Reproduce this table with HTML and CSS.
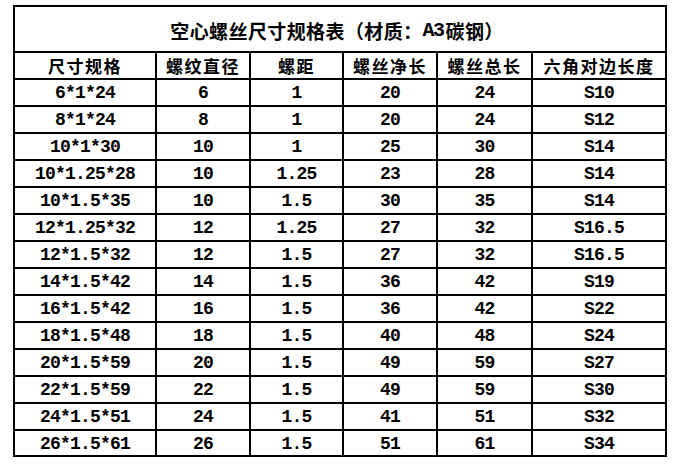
FILE: index.html
```html
<!DOCTYPE html>
<html lang="zh-CN">
<head>
<meta charset="utf-8">
<title>空心螺丝尺寸规格表</title>
<link rel="stylesheet" href="styles.css">
</head>
<body>
<div class="sheet">
  <div class="title">空心螺丝尺寸规格表（材质：<span class="latin">A3</span>碳钢）</div>
  <div class="head">尺寸规格</div><div class="head">螺纹直径</div><div class="head">螺距</div><div class="head">螺丝净长</div><div class="head">螺丝总长</div><div class="head">六角对边长度</div>
  <div class="c">6*1*24</div><div class="c">6</div><div class="c">1</div><div class="c">20</div><div class="c">24</div><div class="c">S10</div>
  <div class="c">8*1*24</div><div class="c">8</div><div class="c">1</div><div class="c">20</div><div class="c">24</div><div class="c">S12</div>
  <div class="c">10*1*30</div><div class="c">10</div><div class="c">1</div><div class="c">25</div><div class="c">30</div><div class="c">S14</div>
  <div class="c">10*1.25*28</div><div class="c">10</div><div class="c">1.25</div><div class="c">23</div><div class="c">28</div><div class="c">S14</div>
  <div class="c">10*1.5*35</div><div class="c">10</div><div class="c">1.5</div><div class="c">30</div><div class="c">35</div><div class="c">S14</div>
  <div class="c">12*1.25*32</div><div class="c">12</div><div class="c">1.25</div><div class="c">27</div><div class="c">32</div><div class="c">S16.5</div>
  <div class="c">12*1.5*32</div><div class="c">12</div><div class="c">1.5</div><div class="c">27</div><div class="c">32</div><div class="c">S16.5</div>
  <div class="c">14*1.5*42</div><div class="c">14</div><div class="c">1.5</div><div class="c">36</div><div class="c">42</div><div class="c">S19</div>
  <div class="c">16*1.5*42</div><div class="c">16</div><div class="c">1.5</div><div class="c">36</div><div class="c">42</div><div class="c">S22</div>
  <div class="c">18*1.5*48</div><div class="c">18</div><div class="c">1.5</div><div class="c">40</div><div class="c">48</div><div class="c">S24</div>
  <div class="c">20*1.5*59</div><div class="c">20</div><div class="c">1.5</div><div class="c">49</div><div class="c">59</div><div class="c">S27</div>
  <div class="c">22*1.5*59</div><div class="c">22</div><div class="c">1.5</div><div class="c">49</div><div class="c">59</div><div class="c">S30</div>
  <div class="c">24*1.5*51</div><div class="c">24</div><div class="c">1.5</div><div class="c">41</div><div class="c">51</div><div class="c">S32</div>
  <div class="c">26*1.5*61</div><div class="c">26</div><div class="c">1.5</div><div class="c">51</div><div class="c">61</div><div class="c">S34</div>
</div>
</body>
</html>
```
FILE: styles.css
```css
html, body {
  margin: 0;
  padding: 0;
  background: #fff;
}
body {
  padding: 5px 0 0 13px;
}
.sheet {
  display: grid;
  width: 650px;
  grid-template-columns: 140px 92px 91px 92px 93px 132px;
  grid-template-rows: 44px 25px repeat(13, 25px) 24px;
  gap: 2px;
  padding: 2px;
  background: #000;
}
.sheet > div {
  background: #fff;
  display: flex;
  align-items: center;
  justify-content: center;
  color: #000;
  white-space: nowrap;
}
.title {
  grid-column: 1 / -1;
  font-family: "Noto Sans CJK SC", sans-serif;
  font-weight: 700;
  font-size: 19px;
  letter-spacing: 0.4px;
  color: #1a1a1a;
  padding-right: 6px;
  padding-top: 2px;
}
.latin {
  font-family: "Liberation Mono", monospace;
  font-size: 20px;
  letter-spacing: -1.5px;
  margin-right: 2px;
}
.head {
  font-family: "Noto Sans CJK SC", sans-serif;
  font-weight: 700;
  font-size: 17px;
  letter-spacing: 1.5px;
}
.c {
  font-family: "Liberation Mono", monospace;
  font-weight: 700;
  font-size: 18px;
  letter-spacing: -0.8px;
  padding-top: 1px;
}
```
